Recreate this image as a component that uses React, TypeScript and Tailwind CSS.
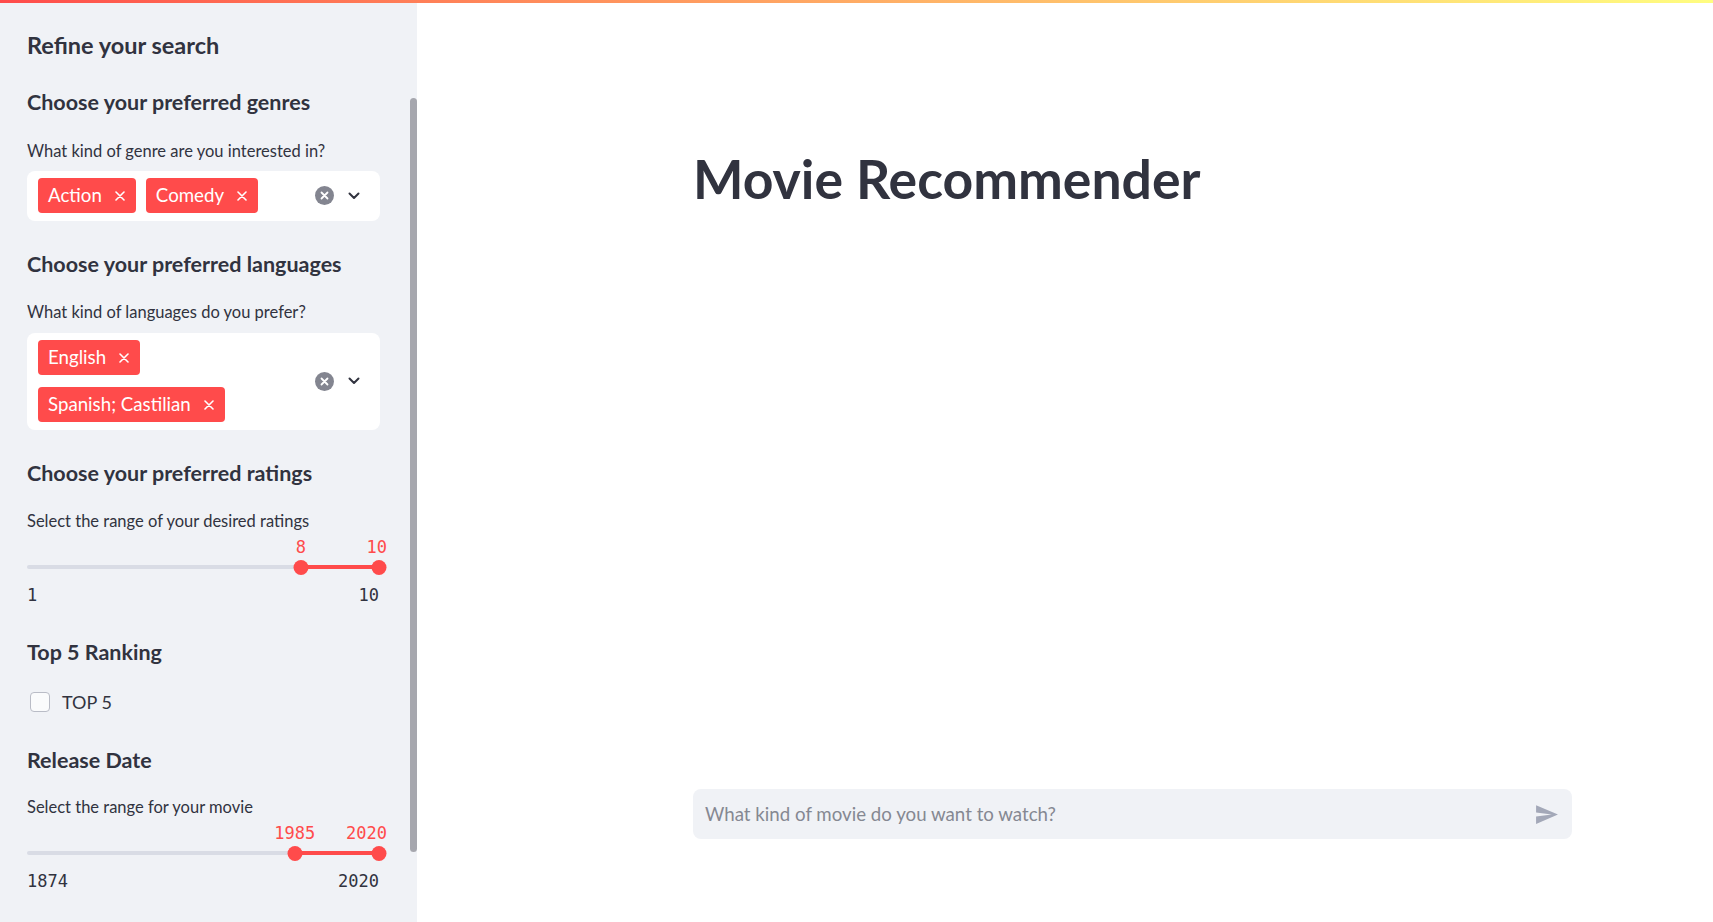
import { ReactNode } from "react";

const SANS = "font-['Lato','Noto_Sans',sans-serif]";
const MONO = "font-['DejaVu_Sans_Mono','Liberation_Mono',monospace]";

function Tag({ label }: { label: string }) {
  return (
    <span className="flex h-[35px] items-center gap-[13px] rounded-[4px] bg-[#ff4b4b] pl-[10px] pr-[11px] text-[18.7px] leading-none text-white">
      {label}
      <svg width="10" height="10" viewBox="0 0 10 10" className="shrink-0">
        <path d="M1 1L9 9M9 1L1 9" stroke="white" strokeWidth="1.6" strokeLinecap="round" />
      </svg>
    </span>
  );
}

function MultiSelect({ tags }: { tags: string[] }) {
  return (
    <div className="flex w-full items-center rounded-[8px] bg-white pb-[8px] pl-[11px] pt-[7px]">
      <div className="flex flex-1 flex-wrap gap-x-[10px] gap-y-[12px]">
        {tags.map((t) => (
          <Tag key={t} label={t} />
        ))}
      </div>
      <div className="flex items-center gap-[14px] pl-[4px] pr-[20px]">
        <svg width="19" height="19" viewBox="0 0 19 19">
          <circle cx="9.5" cy="9.5" r="9.5" fill="#838590" />
          <path d="M6.5 6.5L12.5 12.5M12.5 6.5L6.5 12.5" stroke="white" strokeWidth="1.8" strokeLinecap="round" />
        </svg>
        <svg width="12" height="8" viewBox="0 0 12 8">
          <path d="M1.5 1.5L6 6L10.5 1.5" stroke="#31333f" strokeWidth="2" fill="none" strokeLinecap="round" strokeLinejoin="round" />
        </svg>
      </div>
    </div>
  );
}

function RangeSlider({
  min,
  max,
  low,
  high,
}: {
  min: number;
  max: number;
  low: number;
  high: number;
}) {
  const pos = (v: number) => 0.5 + ((v - min) / (max - min)) * 351.5;
  const a = pos(low);
  const b = pos(high);

  return (
    <div className={`mt-[3px] w-[353px] ${MONO}`}>
      <div className="relative h-[22px] text-[17px] leading-[22px] text-[#ff4b4b]">
        <span className="absolute top-0 -translate-x-1/2" style={{ left: a }}>
          {low}
        </span>
        {high === max ? (
          <span className="absolute right-[-7px] top-0">{high}</span>
        ) : (
          <span className="absolute top-0 -translate-x-1/2" style={{ left: b }}>
            {high}
          </span>
        )}
      </div>
      <div className="relative mt-[1px] h-[16px]">
        <div className="absolute left-0 right-0 top-[6px] h-[4px] rounded-full bg-[#d9dce5]" />
        <div
          className="absolute top-[6px] h-[4px] bg-[#ff4b4b]"
          style={{ left: a, width: b - a }}
        />
        <div
          className="absolute top-[0.5px] h-[15px] w-[15px] -translate-x-1/2 rounded-full bg-[#ff4b4b]"
          style={{ left: a }}
        />
        <div
          className="absolute top-[0.5px] h-[15px] w-[15px] -translate-x-1/2 rounded-full bg-[#ff4b4b]"
          style={{ left: b }}
        />
      </div>
      <div className="mt-[9px] flex h-[22px] w-[352px] justify-between text-[17px] leading-[22px] text-[#31333f]">
        <span>{min}</span>
        <span>{max}</span>
      </div>
    </div>
  );
}

function Heading({ children, mt }: { children: ReactNode; mt: string }) {
  return (
    <h3 className={`${mt} h-[30px] text-[21.5px] font-bold leading-[30px] text-[#31333f]`}>
      {children}
    </h3>
  );
}

function Label({ children, mt }: { children: ReactNode; mt: string }) {
  return <p className={`${mt} h-[22px] text-[16.5px] leading-[21px] text-[#31333f]`}>{children}</p>;
}

export default function App() {
  return (
    <div className={`relative flex h-screen w-full overflow-hidden bg-white ${SANS}`}>
      <div className="absolute left-0 right-0 top-0 z-10 h-[3px] bg-gradient-to-r from-[#ff4b4b] to-[#fffd80]" />

      <aside className="relative h-full w-[417px] shrink-0 overflow-hidden bg-[#f0f2f6]">
        <div className="ml-[27px] w-[353px] pt-[29px]">
          <h2 className="h-[32px] text-[23.5px] font-bold leading-[32px] text-[#31333f]">
            Refine your search
          </h2>

          <Heading mt="mt-[26px]">Choose your preferred genres</Heading>
          <Label mt="mt-[24px]">What kind of genre are you interested in?</Label>
          <div className="mt-[8px]">
            <MultiSelect tags={["Action", "Comedy"]} />
          </div>

          <Heading mt="mt-[28px]">Choose your preferred languages</Heading>
          <Label mt="mt-[23px]">What kind of languages do you prefer?</Label>
          <div className="mt-[9px]">
            <MultiSelect tags={["English", "Spanish; Castilian"]} />
          </div>

          <Heading mt="mt-[28px]">Choose your preferred ratings</Heading>
          <Label mt="mt-[23px]">Select the range of your desired ratings</Label>
          <RangeSlider min={1} max={10} low={8} high={10} />

          <Heading mt="mt-[31px]">Top 5 Ranking</Heading>
          <label className="mt-[23px] flex h-[24px] items-center gap-[12px] pl-[3px] text-[18px] text-[#31333f]">
            <span className="h-[20px] w-[20px] rounded-[4px] border border-[#b9bcc6] bg-[#fafbfc]" />
            TOP 5
          </label>

          <Heading mt="mt-[31px]">Release Date</Heading>
          <Label mt="mt-[22px]">Select the range for your movie</Label>
          <RangeSlider min={1874} max={2020} low={1985} high={2020} />
        </div>

        <div className="absolute right-0 top-[98px] h-[754px] w-[7px] rounded-full bg-[#a6a7ae]" />
      </aside>

      <main className="flex h-full flex-1 flex-col pl-[276px]">
        <h1 className="mt-[146px] h-[64px] text-[53.5px] font-bold leading-[64px] text-[#31333f]">
          Movie Recommender
        </h1>

        <div className="mb-[83px] mt-auto flex h-[50px] w-[879px] items-center rounded-[8px] bg-[#f0f2f6] pl-[12px] pr-[13px]">
          <span className="flex-1 text-[18.7px] text-[#858892]">What kind of movie do you want to watch?</span>
          <svg width="25" height="25" viewBox="0 0 24 24">
            <path d="M2.01 21L23 12 2.01 3 2 10l15 2-15 2z" fill="#a3a8b8" />
          </svg>
        </div>
      </main>
    </div>
  );
}
